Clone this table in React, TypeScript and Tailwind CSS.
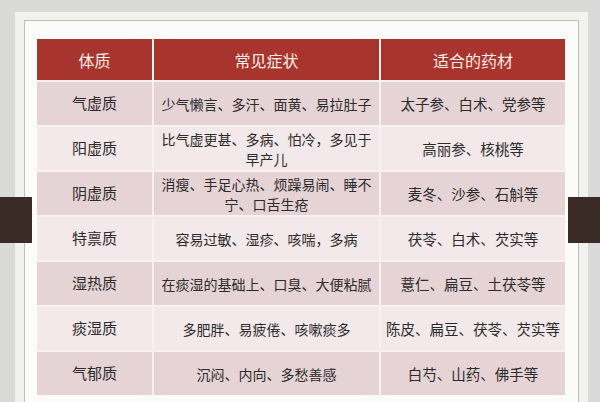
const rows: { type: string; symptoms: string[]; herbs: string }[] = [
  { type: "气虚质", symptoms: ["少气懒言、多汗、面黄、易拉肚子"], herbs: "太子参、白术、党参等" },
  { type: "阳虚质", symptoms: ["比气虚更甚、多病、怕冷，多见于", "早产儿"], herbs: "高丽参、核桃等" },
  { type: "阴虚质", symptoms: ["消瘦、手足心热、烦躁易闹、睡不", "宁、口舌生疮"], herbs: "麦冬、沙参、石斛等" },
  { type: "特禀质", symptoms: ["容易过敏、湿疹、咳喘，多病"], herbs: "茯苓、白术、芡实等" },
  { type: "湿热质", symptoms: ["在痰湿的基础上、口臭、大便粘腻"], herbs: "薏仁、扁豆、土茯苓等" },
  { type: "痰湿质", symptoms: ["多肥胖、易疲倦、咳嗽痰多"], herbs: "陈皮、扁豆、茯苓、芡实等" },
  { type: "气郁质", symptoms: ["沉闷、内向、多愁善感"], herbs: "白芍、山药、佛手等" },
]

export default function App() {
  return (
    <div
      className="relative w-[600px] h-[402px] overflow-hidden bg-[#d9d9d7] pl-[15px] pt-[12px]"
      style={{ fontFamily: '"Noto Sans CJK SC", "Noto Sans", sans-serif' }}
    >
      <div className="w-[573px] h-[400px] bg-[#f1f1ef] pl-[9px] pt-[8px] pr-[9px]">
        <div className="h-full border border-[#c2c0aa] bg-[#fbfbf9] pl-[12px] pt-[18px]">
          <div className="grid w-[528px] grid-cols-[115px_225px_184px] gap-[2px] bg-[#f7f1f1]">
            <div className="flex h-[41px] items-center justify-center bg-[#a7342d] text-[16px] text-[#fbeee6]">体质</div>
            <div className="flex h-[41px] items-center justify-center bg-[#a7342d] text-[16px] text-[#fbeee6]">常见症状</div>
            <div className="flex h-[41px] items-center justify-center bg-[#a7342d] text-[16px] text-[#fbeee6]">适合的药材</div>
            {rows.map((r, i) => {
              const bg = i % 2 === 0 ? "bg-[#e6d3d5]" : "bg-[#f3e8ea]"
              return [
                <div key={r.type + "a"} className={`flex h-[43px] items-center justify-center text-[15px] text-[#2b2b2b] ${bg}`}>
                  {r.type}
                </div>,
                <div key={r.type + "b"} className={`flex h-[43px] flex-col items-center justify-center text-[14px] leading-[20px] whitespace-nowrap text-[#2b2b2b] ${bg}`}>
                  {r.symptoms.map((s) => (
                    <span key={s}>{s}</span>
                  ))}
                </div>,
                <div key={r.type + "c"} className={`flex h-[43px] items-center justify-center text-[14.5px] whitespace-nowrap text-[#2b2b2b] ${bg}`}>
                  {r.herbs}
                </div>,
              ]
            })}
          </div>
        </div>
      </div>
      <div className="absolute left-0 top-[197px] h-[46px] w-[32px] bg-[#3a2b27]" />
      <div className="absolute right-0 top-[197px] h-[46px] w-[32px] bg-[#3a2b27]" />
    </div>
  )
}
